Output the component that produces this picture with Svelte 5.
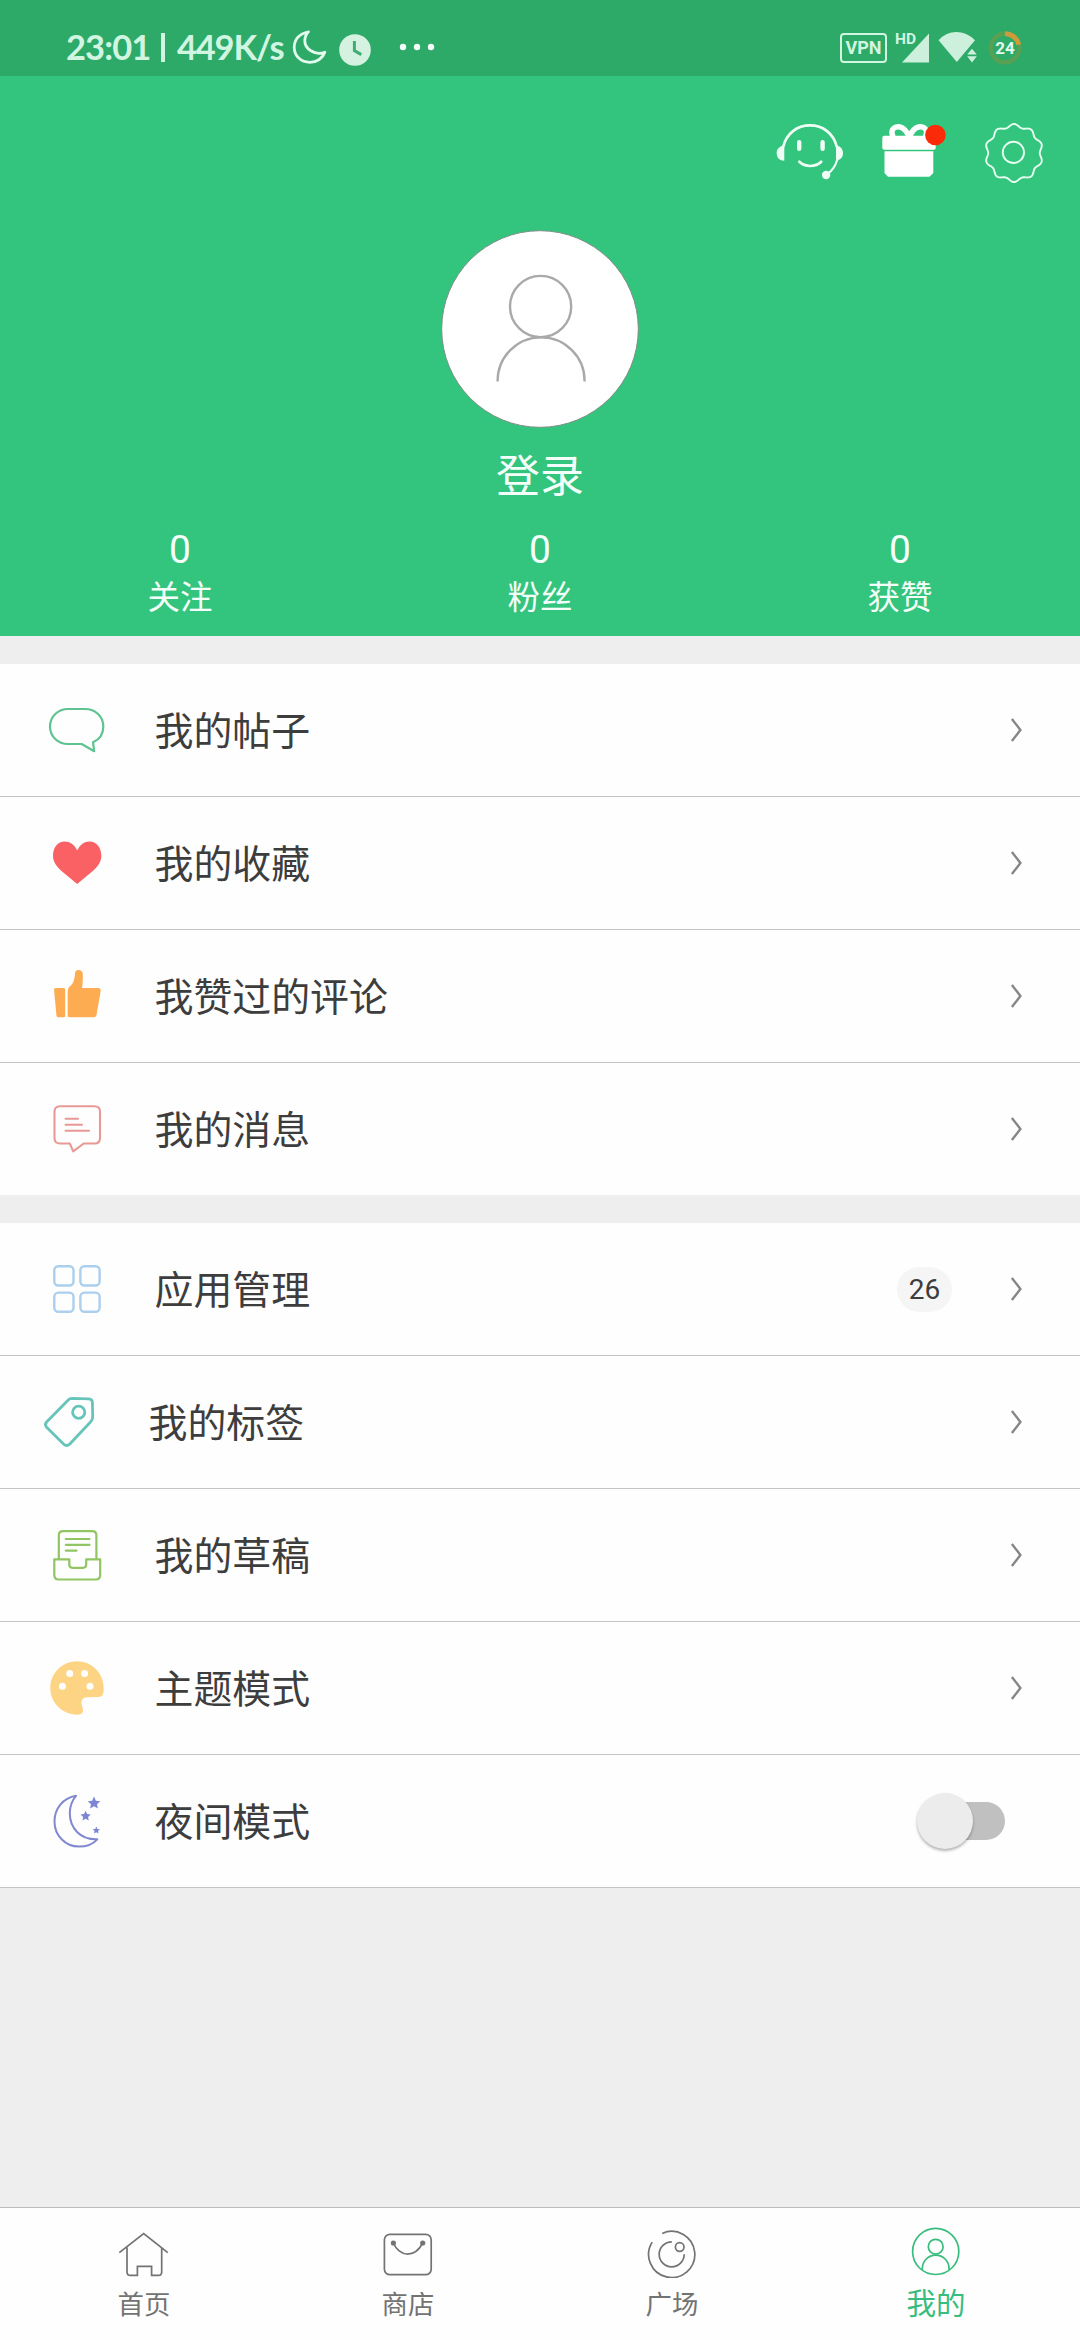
<script>
  const posts = [
    { icon: 'bubble', label: '我的帖子' },
    { icon: 'heart', label: '我的收藏' },
    { icon: 'thumb', label: '我赞过的评论' },
    { icon: 'message', label: '我的消息' },
  ];
  const tools = [
    { icon: 'grid', label: '应用管理', badge: '26' },
    { icon: 'tag', label: '我的标签', shifted: true },
    { icon: 'draft', label: '我的草稿' },
    { icon: 'palette', label: '主题模式' },
    { icon: 'night', label: '夜间模式', toggle: true },
  ];
  const stats = [
    { value: '0', label: '关注' },
    { value: '0', label: '粉丝' },
    { value: '0', label: '获赞' },
  ];
  const tabs = [
    { icon: 'home', label: '首页' },
    { icon: 'shop', label: '商店' },
    { icon: 'plaza', label: '广场' },
    { icon: 'mine', label: '我的', active: true },
  ];

  // Ten-lobed outline of the settings gear.
  function gearPath(cx, cy, r, depth, lobes) {
    let d = '';
    for (let i = 0; i < 240; i++) {
      const a = (i / 240) * Math.PI * 2;
      const rr = r + depth * Math.cos(lobes * a);
      d += `${i ? 'L' : 'M'}${(cx + rr * Math.sin(a)).toFixed(2)} ${(cy - rr * Math.cos(a)).toFixed(2)}`;
    }
    return d + 'Z';
  }

  function starPath(cx, cy, r) {
    let d = '';
    for (let i = 0; i < 10; i++) {
      const a = (i * Math.PI) / 5;
      const rr = i % 2 ? r * 0.48 : r;
      d += `${i ? 'L' : 'M'}${(cx + rr * Math.sin(a)).toFixed(2)} ${(cy - rr * Math.cos(a)).toFixed(2)}`;
    }
    return d + 'Z';
  }
</script>

{#snippet menuIcon(name)}
  <svg class="menu-icon" viewBox="0 0 60 60" fill="none">
    {#if name === 'bubble'}
      <path stroke="#5fc391" stroke-width="2.2" stroke-linejoin="round" d="M21 9H38C48.5 9 56.3 16.5 56.3 26.5C56.3 34 52.5 39.5 46 42.3L47.2 51.2L34.7 44H21C11 44 3 36.5 3 26.5C3 16.5 11 9 21 9Z" />
    {:else if name === 'heart'}
      <path fill="#fa6164" d="M30.2 17.5C27.5 11.5 22.8 8.5 17.8 8.5C10.8 8.5 6 14.5 6 22.5C6 29.5 9.5 33.5 16 39.2L30.2 51L44.3 39.2C51 33.5 54.3 29.5 54.3 22.5C54.3 14.5 49.3 8.5 42.5 8.5C37.5 8.5 33 11.5 30.2 17.5Z" />
    {:else if name === 'thumb'}
      <path fill="#fdac52" d="M8.6 22H16.8Q18.2 22 18.2 23.5V49.8Q18.2 51.3 16.8 51.3H11.2Q9.7 51.3 9.5 49.8L7 23.5Q6.9 22 8.6 22Z" />
      <path fill="#fdac52" d="M20.7 25V49.5Q20.7 51.3 22.5 51.3H46.8Q49 51.3 49.5 49L53.7 25Q53.9 22 51 22H35Q36 17 35.8 8Q35.3 4 31.4 4Q28 4 28 8Q27.5 15 24.8 18.5L21.8 21.5Q20.7 23 20.7 25Z" />
    {:else if name === 'message'}
      <g stroke="#e89995" stroke-width="2.1" stroke-linejoin="round" stroke-linecap="round">
        <path d="M13 7.3H47.5Q53 7.3 53 12.8V39Q53 44.5 47.5 44.5H36.7L26.2 52.4L22.8 44.5H13Q7.5 44.5 7.5 39V12.8Q7.5 7.3 13 7.3Z" />
        <path d="M18.6 19.8H31M18.6 25.8H35M18.6 31.7H42" />
      </g>
    {:else if name === 'grid'}
      <g stroke="#abcfed" stroke-width="2.4">
        <rect x="7.3" y="7.3" width="19.2" height="19.2" rx="4" />
        <rect x="33.4" y="7.3" width="19.2" height="19.2" rx="4" />
        <rect x="7.3" y="33.6" width="19.2" height="19.2" rx="4" />
        <rect x="33.4" y="33.6" width="19.2" height="19.2" rx="4" />
      </g>
    {:else if name === 'tag'}
      <g stroke="#66c5b8" stroke-width="2.8" stroke-linejoin="round">
        <path d="M31 6.4L48 6.8Q51.4 7 51.4 10.5L51.7 24.5Q51.8 27.7 49.5 30L28.8 52Q25.7 55 22.8 52.3L5.6 35.3Q3.3 32.7 5.6 30L27 8.2Q28.6 6.4 31 6.4Z" />
        <circle cx="37.7" cy="20.3" r="6.1" />
      </g>
    {:else if name === 'draft'}
      <g stroke="#91c563" stroke-width="2.2" stroke-linejoin="round" stroke-linecap="round">
        <path d="M11.8 33.8V10.5Q11.8 6.2 16.2 6.2H45Q49.4 6.2 49.4 10.5V33.8" />
        <path d="M7.3 34.3H22.3V39.5Q22.3 42.8 25.5 42.8H36Q39.2 42.8 39.2 39.5V34.3H53.2V50Q53.2 54.5 48.7 54.5H11.8Q7.3 54.5 7.3 50Z" />
        <path d="M18.8 14H42.5M18.8 19.8H42.5M18.8 25.6H29.5" />
      </g>
    {:else if name === 'palette'}
      <path fill="#fdd384" d="M30 3.3C45 3.3 56.7 15.3 56.7 30.3Q57 38.9 52 39L40 39.3Q35.2 39.5 34.4 43.8C34.2 47.5 36 49.5 36 52Q36 56.6 31 56.7C15.5 56.7 3.3 45 3.3 30C3.3 15.3 15.3 3.3 30 3.3Z" />
      <g fill="#fff">
        <circle cx="22.7" cy="15.4" r="3.5" /><circle cx="37.6" cy="15.4" r="3.5" />
        <circle cx="15.4" cy="28.3" r="3.5" /><circle cx="43" cy="28.3" r="3.5" />
      </g>
    {:else if name === 'night'}
      <path stroke="#8088d0" stroke-width="2" stroke-linejoin="round" d="M29 4.8C16 7 7.5 17.5 7.5 30.5C7.5 44.5 18.3 55.6 32 55.6C40 55.6 46.5 52.5 50.3 48.3C33 48.8 22.8 37 22.8 22C22.8 15.5 25 9.5 29 4.8Z" />
      <g fill="#7c86d4">
        <path d={starPath(47, 12.2, 6.6)} />
        <path d={starPath(38.6, 25.2, 5.4)} />
        <path d={starPath(49.3, 39.4, 3.8)} />
      </g>
    {/if}
  </svg>
{/snippet}

{#snippet tabIcon(name)}
  <svg class="tab-icon" viewBox="0 0 52 52" fill="none" stroke="currentColor" stroke-width="1.7">
    {#if name === 'home'}
      <path d="M1.3 26.7L25.7 7.6L49.8 26.7M9 21.5V46Q9 49.4 12.4 49.4H19.4V40.4H33.6V49.4H40.3Q43.7 49.4 43.7 46V21.5" />
    {:else if name === 'shop'}
      <rect x="2.4" y="8.3" width="46.8" height="40.4" rx="5.5" />
      <path d="M11.5 17.5C14 23 19.5 28.1 25.6 28.1C32 28.1 37.5 23 40.5 17.5" />
      <g fill="currentColor" stroke="none"><circle cx="11.4" cy="17" r="2.6" /><circle cx="40.7" cy="17" r="2.6" /></g>
    {:else if name === 'plaza'}
      <path d="M16.2 7.4A23.1 23.1 0 1 1 6.2 16.1" />
      <path d="M25.8 15.8A12.5 12.5 0 1 0 38.2 28.3" />
      <circle cx="33.7" cy="21" r="4.3" />
    {:else if name === 'mine'}
      <circle cx="25.7" cy="25.4" r="23.1" />
      <circle cx="25.7" cy="20.7" r="7.4" />
      <path d="M12.4 43.8V42.4A13.3 13.3 0 0 1 39 42.4V43.8" />
    {/if}
  </svg>
{/snippet}

{#snippet menu(items)}
  <ul class="menu">
    {#each items as item}
      <li class="row" class:shifted={item.shifted}>
        {@render menuIcon(item.icon)}
        <span class="label">{item.label}</span>
        {#if item.badge}<span class="badge">{item.badge}</span>{/if}
        {#if item.toggle}
          <span class="switch"><span class="knob"></span></span>
        {:else}
          <svg class="chevron" viewBox="0 0 14 28" fill="none">
            <path d="M2.9 3L11.4 14L2.9 25" stroke="#868686" stroke-width="2.4" />
          </svg>
        {/if}
      </li>
    {/each}
  </ul>
{/snippet}

<div class="screen">
  <div class="status">
    <div class="status-left">
      <span class="clock">23:01</span>
      <span class="bar"></span>
      <span class="speed">449K/s</span>
      <svg class="s-moon" viewBox="0 0 36 36" fill="none">
        <path d="M16.5 2.8C7 4.5 2.2 11 2.2 18.3C2.2 27 9 33.3 17.8 33.3C25 33.3 30.8 29.2 32.8 23.2C22.5 27 12.5 19.5 12.8 11.5C13 7.5 14 5.2 16.5 2.8Z" stroke="#e3fbed" stroke-width="2.8" stroke-linejoin="round" />
      </svg>
      <svg class="s-clock" viewBox="0 0 32 32" fill="none">
        <circle cx="16" cy="16" r="15.8" fill="#d5f2e0" />
        <path d="M15.4 7V16.6L22.3 20.6" stroke="#3fae74" stroke-width="3" />
      </svg>
      <svg class="s-dots" viewBox="0 0 36 8" fill="#f4fff9">
        <circle cx="4" cy="4" r="3.2" /><circle cx="18" cy="4" r="3.2" /><circle cx="32" cy="4" r="3.2" />
      </svg>
    </div>
    <div class="status-right">
      <span class="vpn">VPN</span>
      <span class="signal">
        <span class="hd">HD</span>
        <svg viewBox="0 0 28 30"><path d="M27 0.5V29.5H0Z" fill="#cdf0dc" /></svg>
      </span>
      <svg class="wifi" viewBox="0 0 40 32">
        <path d="M0.6 9.2Q8 1 18.3 1Q28.6 1 37 9.2L18.8 31Z" fill="#cdf0dc" />
        <path d="M34 14L41 24L34 34L26 24Z" fill="#2da968" />
        <path d="M34 17.8L38.8 23.4H29.2ZM34 31.5L29.2 25.2H38.8Z" fill="#cdf0dc" />
      </svg>
      <svg class="battery" viewBox="0 0 34 34">
        <circle cx="17" cy="17" r="14.3" fill="none" stroke="#58a153" stroke-width="4.4" />
        <path d="M17 2.7A14.3 14.3 0 0 1 30.9 13.6" fill="none" stroke="#cf9a3a" stroke-width="4.8" />
        <text x="17" y="23.2" text-anchor="middle">24</text>
      </svg>
    </div>
  </div>

  <header>
    <div class="actions">
      <svg class="service" viewBox="0 0 80 70" fill="none" stroke="#effff6" stroke-width="2.7" stroke-linecap="round">
        <path d="M13.3 28.5C16.5 15.5 27 7.4 40 7.4C53 7.4 63.5 15.5 66.7 28.5" />
        <path d="M67.3 41.5C65.5 48 62.5 52.5 57.5 56" stroke-width="2.2" />
        <path d="M14.3 27.6V42.7C9.5 42.7 6.7 39.6 6.7 35.2C6.7 31 9.5 28.2 14.3 27.6ZM66 27.6V42.4C70.5 42 73 39.4 73 35.2C73 31 70.5 28.2 66 27.6Z" fill="#effff6" stroke="none" />
        <path d="M29.2 24.2V30.8M52.6 24.2V30.8" stroke-width="4.4" />
        <path d="M29.4 43.8C35 49.4 45.5 49.4 51.2 43.8" />
        <circle cx="56.1" cy="57" r="4.2" fill="#effff6" stroke="none" />
      </svg>
      <svg class="gift" viewBox="0 0 75 70">
        <rect x="7.3" y="17.8" width="53.4" height="14" rx="2" fill="#fff" />
        <path d="M9.5 33.3H58.3V55L54.5 58.7H13L9.5 55Z" fill="#fff" />
        <path d="M18.2 19C14.5 11 20 8 25 9C29.5 10 32 14 34.3 19C36.5 14 39 10 43.5 9C48.5 8 54 11 50.3 19" fill="none" stroke="#fff" stroke-width="5.4" />
        <circle cx="60.4" cy="17" r="10.3" fill="#fb2a08" />
      </svg>
      <svg class="gear" viewBox="0 0 68 70" fill="none" stroke="#e6fff1" stroke-width="1.9">
        <path d={gearPath(34, 35, 27.4, 1.6, 10)} />
        <circle cx="33.4" cy="34.4" r="10.6" />
      </svg>
    </div>
    <svg class="avatar" viewBox="0 0 198 198" fill="none">
      <circle cx="99" cy="99" r="98.3" fill="#fff" stroke="#7f8f86" stroke-width="1" />
      <g stroke="#a9a9a9" stroke-width="2.4">
        <circle cx="99.6" cy="76.5" r="30.6" />
        <path d="M56.6 151.6V150.9A43.5 43.5 0 0 1 143.6 150.9V151.6" />
      </g>
    </svg>
    <div class="login">登录</div>
    <div class="stats">
      {#each stats as s}
        <div class="stat"><span class="num">{s.value}</span><span class="cap">{s.label}</span></div>
      {/each}
    </div>
  </header>

  <main>
    {@render menu(posts)}
    {@render menu(tools)}
  </main>

  <nav>
    {#each tabs as t}
      <div class="tab" class:active={t.active}>
        {@render tabIcon(t.icon)}
        <span>{t.label}</span>
      </div>
    {/each}
  </nav>
</div>

<style>
  :global(body) { margin: 0; background: #eee; }
  .screen {
    width: 1080px;
    height: 2340px;
    display: flex;
    flex-direction: column;
    background: #eee;
    font-family: "Noto Sans CJK SC", sans-serif;
    overflow: hidden;
  }
  svg { display: block; flex: none; }

  .status {
    height: 76px;
    flex: none;
    box-sizing: border-box;
    padding: 0 58px 0 66px;
    display: flex;
    justify-content: space-between;
    background: #2da968;
    color: #d0f5e0;
    font-family: Lato, sans-serif;
  }
  .status-left, .status-right { display: flex; align-items: flex-start; }
  .clock, .speed {
    font-size: 34.5px;
    line-height: 40px;
    font-weight: 700;
    margin-top: 27px;
    white-space: nowrap;
  }
  .clock { width: 94px; letter-spacing: -0.9px; }
  .speed { width: 115px; letter-spacing: -1.2px; }
  .bar { width: 4px; height: 29px; margin: 33px 12px 0 1px; background: #d0f5e0; }
  .s-moon { width: 36px; height: 36px; margin: 29px 0 0 0; }
  .s-clock { width: 32px; height: 32px; margin: 34px 0 0 11px; }
  .s-dots { width: 36px; height: 8px; margin: 43px 0 0 28px; }
  .vpn {
    box-sizing: border-box;
    width: 47px;
    height: 30px;
    margin-top: 33px;
    border: 2.5px solid #d0f5e0;
    border-radius: 4px;
    font: 700 18px/26px Roboto, sans-serif;
    text-align: center;
  }
  .signal { display: flex; margin-left: 8px; }
  .hd { width: 22px; margin: 30px -15px 0 0; font: 700 15.5px/18px Roboto, sans-serif; }
  .signal svg { width: 28px; height: 30px; margin-top: 33px; }
  .wifi { width: 40px; height: 32px; margin: 31px 0 0 8px; }
  .battery { width: 34px; height: 34px; margin: 31px 0 0 10px; }
  .battery text { font: 700 17px Roboto, sans-serif; fill: #e2fbec; }

  header {
    height: 560px;
    flex: none;
    display: flex;
    flex-direction: column;
    align-items: center;
    background: #33c47d;
    color: #f4fffa;
  }
  .actions {
    align-self: flex-end;
    display: flex;
    padding: 42px 32px 0 0;
  }
  .service { width: 80px; height: 70px; margin-right: 25px; }
  .gift { width: 75px; height: 70px; margin-right: 30px; }
  .gear { width: 68px; height: 70px; }
  .avatar { width: 198px; height: 198px; margin-top: 42px; }
  .login { margin-top: 17px; font-size: 44px; line-height: 56px; height: 56px; }
  .stats { align-self: stretch; display: flex; margin-top: 26px; }
  .stat { flex: 1; display: flex; flex-direction: column; align-items: center; }
  .num { font: 400 39px/46px Roboto, sans-serif; }
  .cap { font-size: 32.5px; line-height: 44px; }

  main { flex: 1; }
  .menu {
    list-style: none;
    margin: 28px 0 0;
    padding: 0;
    background: #fefefe;
  }
  .row {
    box-sizing: border-box;
    height: 133px;
    padding: 0 57px 0 47px;
    display: flex;
    align-items: center;
    border-bottom: 1px solid #c3c5c4;
  }
  .menu:first-child .row:last-child { height: 132px; border-bottom: 0; }
  .row.shifted { padding-left: 41px; }
  .menu-icon { width: 60px; height: 60px; }
  .label {
    flex: 1;
    margin-left: 47.5px;
    padding-bottom: 4px;
    font-size: 38.9px;
    line-height: 58px;
    color: #3d3d3d;
  }
  .badge {
    width: 55px;
    height: 45px;
    margin-right: 57px;
    border-radius: 23px;
    background: #f5f5f5;
    color: #3d3d3d;
    font: 400 28px/46px Roboto, sans-serif;
    text-align: center;
  }
  .chevron { width: 14px; height: 28px; }
  .switch {
    width: 80px;
    height: 38px;
    margin-right: 18px;
    border-radius: 19px;
    background: #c0c0c0;
    position: relative;
  }
  .knob {
    position: absolute;
    left: -8px;
    top: -9px;
    width: 56px;
    height: 56px;
    border-radius: 50%;
    background: #ececec;
    box-shadow: 0 2px 3px rgba(0, 0, 0, 0.3);
  }

  nav {
    height: 133px;
    flex: none;
    box-sizing: border-box;
    padding: 0 12px;
    display: flex;
    border-top: 1px solid #bdbdbd;
    background: #fefefe;
    color: #737373;
  }
  .tab {
    flex: 1;
    display: flex;
    flex-direction: column;
    align-items: center;
    padding-top: 18px;
    font-size: 26.4px;
    line-height: 36px;
  }
  .tab-icon { width: 52px; height: 52px; margin-bottom: 7px; }
  .tab.active { color: #38bd7e; font-size: 29.5px; }
  .tab.active span { margin-top: -2px; }
</style>
